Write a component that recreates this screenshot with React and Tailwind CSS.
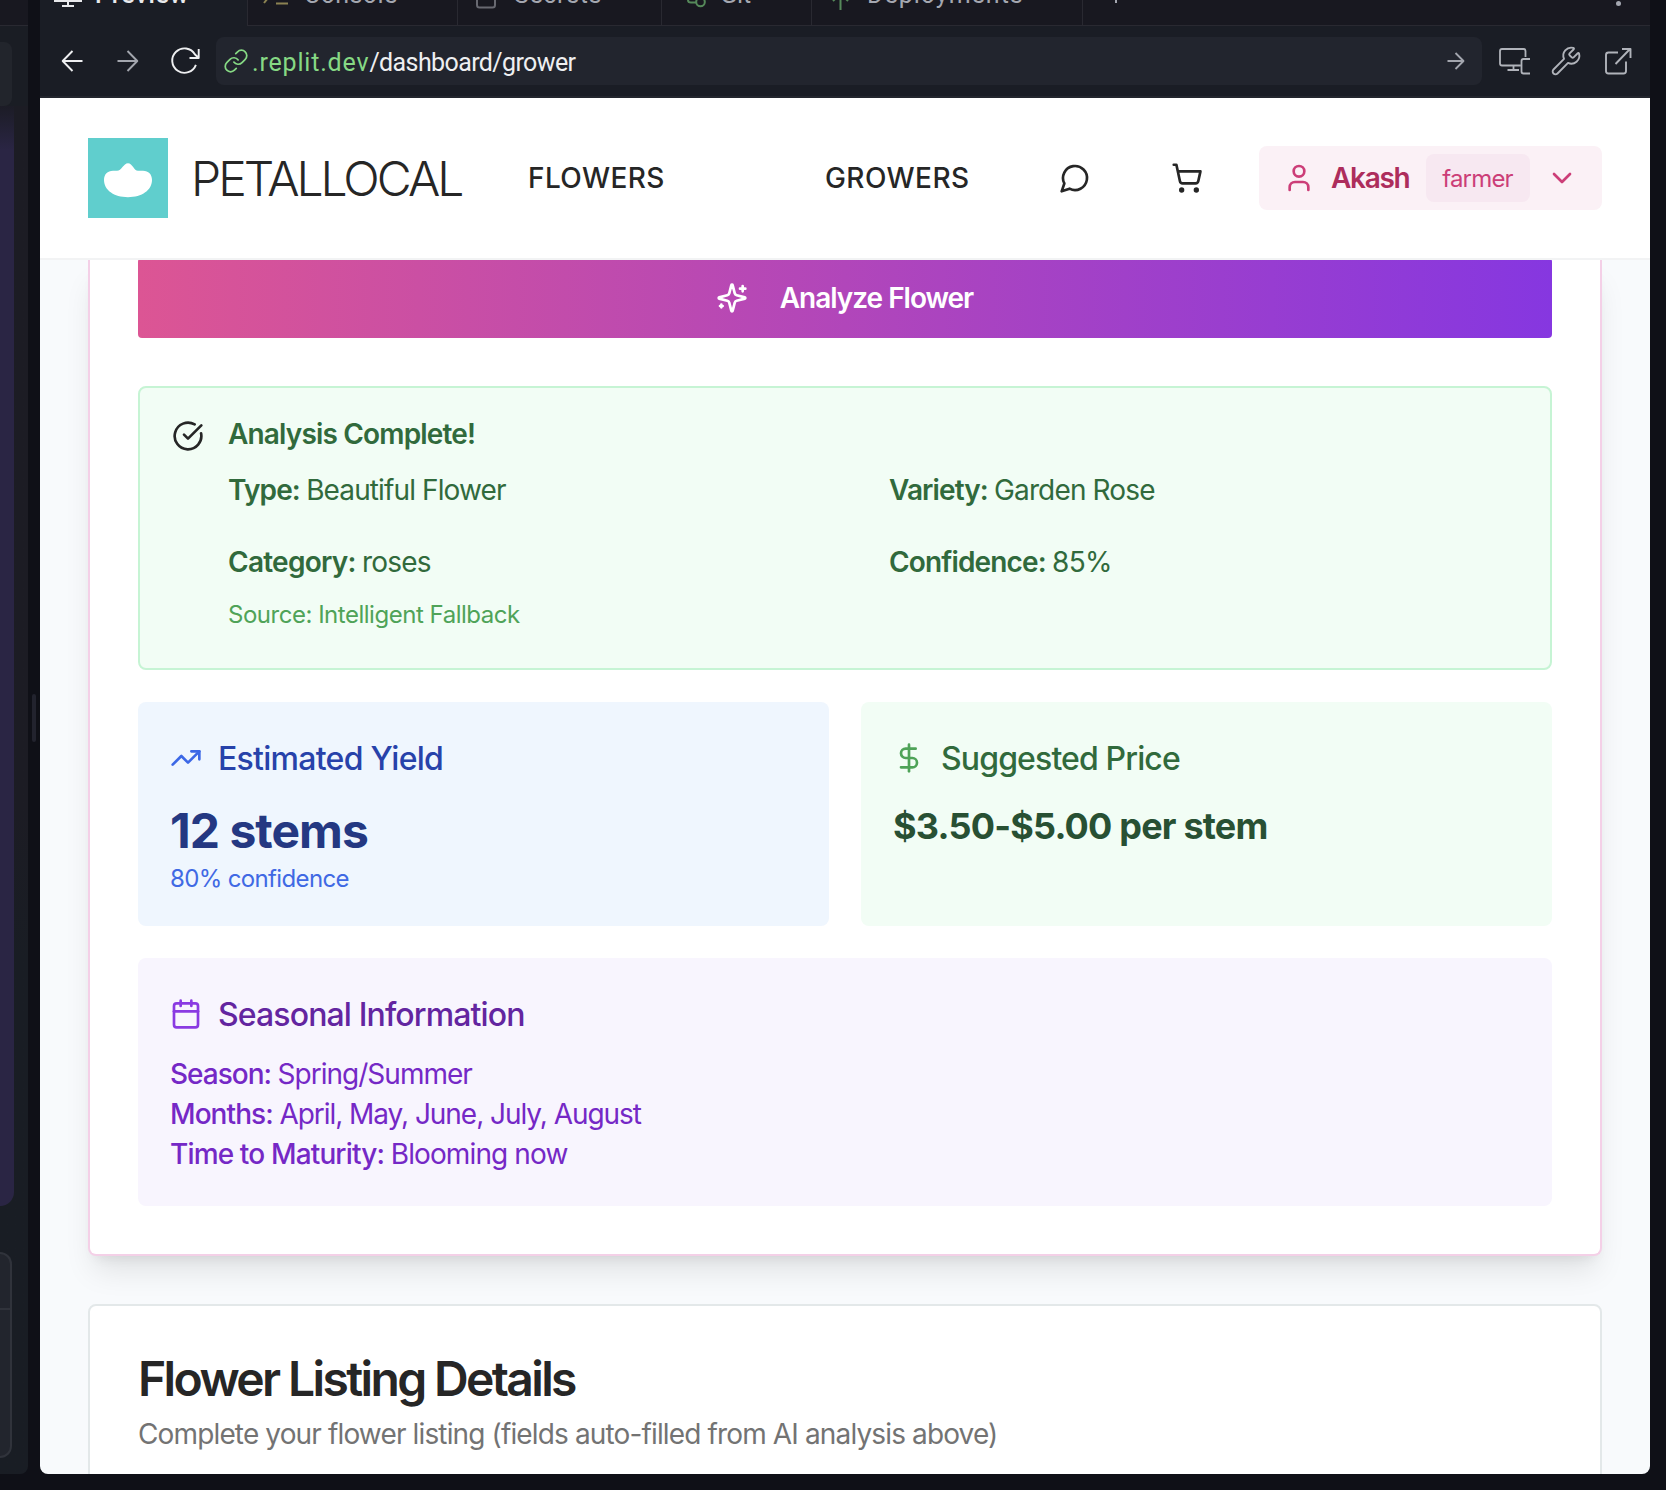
import React from "react";
import { Wrench, Link, User, ChevronDown, TrendingUp, DollarSign, ShoppingCart } from "lucide-react";

function Stroke({ className, w, h, sw = 2, children, cap = "butt" }) {
  return (
    <svg
      className={className}
      width={w}
      height={h}
      viewBox={`0 0 ${w} ${h}`}
      fill="none"
      stroke="currentColor"
      strokeWidth={sw}
      strokeLinecap={cap}
      strokeLinejoin="round"
    >
      {children}
    </svg>
  );
}

function Glyph({ className, children }) {
  return (
    <svg className={className} width="32" height="32" viewBox="0 0 24 24" fill="none" stroke="currentColor" strokeWidth="2" strokeLinecap="round" strokeLinejoin="round">
      {children}
    </svg>
  );
}

function SidePane() {
  return (
    <aside className="flex h-[1474px] w-7 shrink-0 flex-col overflow-hidden rounded-br-lg bg-linear-to-b from-[#1c1c24] from-55% to-[#191d24] to-65%">
      <div className="h-[26px] shrink-0 border-b border-[#292931] bg-[#181820]" />
      <div className="flex h-20 shrink-0 bg-[#1a1d24] pt-4">
        <div className="h-16 w-3 rounded-r-lg bg-[#22252c]" />
      </div>
      <div className="h-[1100px] w-3.5 shrink-0 rounded-br-2xl bg-linear-to-b from-[#1c1c26] to-[#2a2544] to-4%" />
      <div className="mt-[46px] h-[206px] w-3 shrink-0 overflow-hidden rounded-r-2xl border-2 border-l-0 border-[#30333b] bg-[#22252d]">
        <div className="h-[56px] border-b-2 border-[#30333b]" />
      </div>
    </aside>
  );
}

function Tab({ className, icon, children, label }) {
  return (
    <div className={`flex h-[26px] shrink-0 items-start overflow-hidden border-r border-b border-[#292931] bg-[#181820] font-['Roboto',sans-serif] text-[25px] leading-7 text-[#a4a7b0] ${className}`}>
      {icon}
      <span className={`-mt-[19px] whitespace-nowrap ${label}`}>{children}</span>
    </div>
  );
}

function TabBar() {
  return (
    <div className="flex h-[26px] shrink-0 overflow-hidden">
      <div className="flex h-[26px] w-[207px] shrink-0 items-start overflow-hidden bg-[#1a1d25] pl-[14px] font-['Roboto',sans-serif] text-[25px] leading-7 font-medium text-[#e8e9ec]">
        <Stroke w={28} h={8} className="shrink-0">
          <path d="M0 1H28M14 1V6M8 6H20" />
        </Stroke>
        <span className="-mt-[19px] ml-[13px] tracking-[0.8px]">Preview</span>
      </div>
      <Tab
        className="w-[211px] border-l pl-[15px]"
        label="ml-[15px] tracking-[0.4px]"
        icon={
          <Stroke w={26} h={6} className="shrink-0 text-[#8b8252]">
            <path d="M1 3L5 -2M13 3.5H25" />
          </Stroke>
        }
      >
        Console
      </Tab>
      <Tab
        className="w-[204px] pl-[18px]"
        label="ml-[18px] tracking-[0.6px]"
        icon={
          <Stroke w={20} h={9} className="shrink-0 text-[#686971]">
            <path d="M1 0V5Q1 7.5 3.5 7.5H16.500Q19 7.500 19 5V0" />
          </Stroke>
        }
      >
        Secrets
      </Tab>
      <Tab
        className="w-[150px] pl-[25px]"
        label="ml-[14px] tracking-[0px]"
        icon={
          <Stroke w={19} h={8} className="shrink-0 text-[#55895a]">
            <path d="M1 0Q1 2.500 4 2.500H9" />
            <circle cx="13.500" cy="2" r="4.300" />
          </Stroke>
        }
      >
        Git
      </Tab>
      <Tab
        className="w-[271px] pl-[20px]"
        label="ml-[18px] tracking-[1px]"
        icon={
          <Stroke w={17} h={11} className="shrink-0 text-[#55895a]">
            <path d="M8.500 0V10M1 1L3 -1M16 1L14 -1" />
          </Stroke>
        }
      >
        Deployments
      </Tab>
      <div className="flex flex-1 justify-between border-b border-[#292931] bg-[#181820] pr-[29px] pl-8">
        <div className="h-[3px] w-[2px] bg-[#a4a7b0]" />
        <div className="mt-[1px] size-[5px] rounded-full bg-[#a4a7b0]" />
      </div>
    </div>
  );
}

function Toolbar() {
  return (
    <div className="flex h-[72px] shrink-0 items-center border-b-2 border-[#23262e] bg-[#1a1d25] text-[#b0b3ba]">
      <Stroke w={22} h={22} className="ml-[21px] shrink-0 text-[#eeeff1]" sw={1.9}>
        <path d="M21.500 11H2M11.500 1L1.700 11L11.500 21" />
      </Stroke>
      <Stroke w={22} h={22} className="ml-[34px] shrink-0 text-[#a3a6ae]" sw={1.9}>
        <path d="M0.500 11H20M10.500 1L20.300 11L10.500 21" />
      </Stroke>
      <Stroke w={32} h={30} className="ml-[31px] shrink-0 text-[#eeeff1]" sw={1.9}>
        <path d="M25.900 18.800A12.200 12.200 0 1 1 25 8.500L28.500 11.800M28.700 3V12H19.500" />
      </Stroke>
      <div className="ml-[14px] flex h-12 w-[1266px] shrink-0 items-center rounded-lg bg-[#22252e]">
        <Link size={26} strokeWidth={1.6} className="ml-[7px] shrink-0 text-[#86d984]" />
        <div className="mt-[3px] ml-[3px] flex-1 font-['Roboto',sans-serif] text-[25px] leading-8 whitespace-nowrap">
          <span className="tracking-[0.82px] text-[#86d984]">.replit.dev</span>
          <span className="tracking-[-0.6px] text-[#eeeff1]">/dashboard/grower</span>
        </div>
        <Stroke w={18} h={18} className="mr-[17px] shrink-0 text-[#a3a6ae]" sw={1.8}>
          <path d="M0.500 9H16.500M8.500 1L16.500 9L8.500 17" />
        </Stroke>
      </div>
      <Stroke w={32} h={28} className="ml-4 shrink-0" sw={1.8}>
        <path d="M22.500 18.500H4Q2 18.500 2 16.500V4Q2 2 4 2H25.500Q27.500 2 27.500 4V10M15.500 18.500V23M9.500 23H21M32 12H25.500Q23.500 12 23.500 14V24.500Q23.500 26.500 25.500 26.500H32" />
      </Stroke>
      <Wrench size={32} strokeWidth={1.4} className="ml-5 shrink-0" />
      <Stroke w={30} h={30} className="ml-[21px] shrink-0" sw={1.9}>
        <path d="M15 6.500H5.500Q3 6.500 3 9V25Q3 27.500 5.500 27.500H20.500Q23 27.500 23 25V15.500M12.500 18L27 3M19 3H27.500V12" />
      </Stroke>
    </div>
  );
}

function SiteHeader() {
  return (
    <header className="flex h-[162px] shrink-0 items-center border-b-2 border-[#f2f3f4] bg-white pl-12 text-[#262626]">
      <svg width="80" height="80" viewBox="0 0 80 80" className="shrink-0">
        <rect width="80" height="80" fill="#60cecd" />
        <path
          d="M40 25.200C44.500 25.200 46 32.800 50 32.800H55C60.500 32.800 64 36.500 64 42C64 52 54 59.200 40 59.200C26 59.200 16 52 16 42C16 36.500 19.500 32.800 25 32.800H29C33.500 32.800 35.500 25.200 40 25.200Z"
          fill="#fff"
        />
      </svg>
      <div className="mt-0.5 ml-[23px] w-[337px] shrink-0 text-[48px] leading-[56px] font-light tracking-[-3px]">PETALLOCAL</div>
      <div className="w-[297px] shrink-0 text-[28px] leading-10 font-medium tracking-[0.400px]">FLOWERS</div>
      <div className="w-[234px] shrink-0 text-[28px] leading-10 font-medium tracking-[0.430px]">GROWERS</div>
      <Glyph className="mr-20 shrink-0">
        <path d="M7.900 20A9 9 0 1 0 4 16.100L2 22Z" />
      </Glyph>
      <ShoppingCart size={32} className="mr-14 shrink-0" />
      <div className="flex h-16 w-[343px] shrink-0 items-center rounded-lg bg-[#fbf1f6] pl-6 text-[#cc3e78]">
        <User size={32} className="shrink-0" />
        <div className="ml-4 w-[95px] shrink-0 text-[28px] leading-10 font-semibold tracking-[-1.300px] text-[#ad2d5c]">Akash</div>
        <div className="flex h-12 w-[104px] shrink-0 items-center justify-center rounded-lg bg-[#f7e8f1] pt-0.5 pr-px text-2xl tracking-[-0.800px]">farmer</div>
        <ChevronDown size={32} className="ml-4 shrink-0" />
      </div>
    </header>
  );
}

function Field({ label, value, l, v, className = "", weight = "font-semibold" }) {
  return (
    <div className={`flex items-center whitespace-pre text-[28px] ${className}`}>
      <span className={`${weight} ${l}`}>{label}</span>
      <span className={v}>{value}</span>
    </div>
  );
}

function AnalysisCard() {
  return (
    <section className="h-[996px] shrink-0 rounded-b-lg border-2 border-t-0 border-[#f4d0e7] bg-white px-12 shadow-[0_20px_30px_-6px_rgba(0,0,0,0.1),0_8px_12px_-8px_rgba(0,0,0,0.1)]">
      <button className="-mt-[2px] flex h-20 w-full items-center justify-center rounded-[4px] bg-linear-to-r/srgb from-[#dc5594] to-[#8637e0] text-[28px] font-semibold text-white">
        <Glyph className="shrink-0">
          <path d="M9.937 15.500A2 2 0 0 0 8.500 14.063l-6.135-1.582a.5.5 0 0 1 0-.962L8.500 9.936A2 2 0 0 0 9.937 8.500l1.582-6.135a.5.5 0 0 1 .963 0L14.063 8.500A2 2 0 0 0 15.500 9.937l6.135 1.581a.5.5 0 0 1 0 .964L15.500 14.063a2 2 0 0 0-1.437 1.437l-1.582 6.135a.5.5 0 0 1-.963 0z" />
          <path d="M20 3v4M22 5h-4M4 17v2M5 18H3" />
        </Glyph>
        <span className="mr-px ml-8 tracking-[-1.020px]">Analyze Flower</span>
      </button>

      <div className="mt-12 flex h-[284px] rounded-lg border-2 border-[#c6f4d4] bg-[#f2fdf5] pt-8 pr-4 pl-8 text-[#316a3c]">
        <Glyph className="shrink-0 text-[#262626]">
          <path d="M21.801 10A10 10 0 1 1 17 3.335" />
          <path d="m9 11 3 3L22 4" />
        </Glyph>
        <div className="ml-6 flex-1">
          <div className="text-[28px] leading-7 font-semibold tracking-[-0.830px]">Analysis Complete!</div>
          <div className="mt-[14px] grid grid-cols-2 gap-x-4 gap-y-4">
            <Field className="h-14" label="Type: " value="Beautiful Flower" l="tracking-[-0.850px]" v="tracking-[-0.880px]" />
            <Field className="h-14" label="Variety: " value="Garden Rose" l="tracking-[-0.900px]" v="tracking-[-0.850px]" />
            <Field className="h-14" label="Category: " value="roses" l="tracking-[-0.750px]" v="tracking-[-0.800px]" />
            <Field className="h-14" label="Confidence: " value="85%" l="tracking-[-0.850px]" v="tracking-[-0.670px]" />
          </div>
          <div className="mt-[9px] text-2xl leading-8 tracking-[-0.480px] text-[#4fa358]">Source: Intelligent Fallback</div>
        </div>
      </div>

      <div className="mt-8 grid grid-cols-2 gap-8">
        <div className="h-56 rounded-lg bg-[#eff6fe] p-8">
          <div className="flex h-12 items-center">
            <TrendingUp size={32} className="shrink-0 text-[#3c68e6]" />
            <span className="mt-0.5 ml-4 text-[32px] font-medium tracking-[-0.720px] text-[#2742aa]">Estimated Yield</span>
          </div>
          <div className="mt-[17px] text-[48px] leading-16 font-bold tracking-[-0.960px] text-[#243882]">12 stems</div>
          <div className="text-2xl leading-8 tracking-[-0.640px] text-[#4069e4]">80% confidence</div>
        </div>
        <div className="h-56 rounded-lg bg-[#f2fdf5] p-8">
          <div className="flex h-12 items-center">
            <DollarSign size={32} className="shrink-0 text-[#4fa358]" />
            <span className="mt-0.5 ml-4 text-[32px] font-medium tracking-[-0.870px] text-[#316a3c]">Suggested Price</span>
          </div>
          <div className="mt-4 text-4xl leading-14 font-bold tracking-[-0.790px] text-[#285033]">$3.50-$5.00 per stem</div>
        </div>
      </div>

      <div className="mt-8 h-[248px] rounded-lg bg-[#f8f5fe] p-8 text-[#7528c6]">
        <div className="flex h-12 items-center">
          <Glyph className="shrink-0 text-[#8a3ae2]">
            <path d="M8 2v4M16 2v4" />
            <rect width="18" height="18" x="3" y="4" rx="2" />
            <path d="M3 10h18" />
          </Glyph>
          <span className="mt-0.5 ml-4 text-[32px] font-medium tracking-[-0.870px] text-[#6325a0]">Seasonal Information</span>
        </div>
        <div className="mt-4">
          <Field className="h-10" weight="font-medium" label="Season: " value="Spring/Summer" l="tracking-[-1.000px]" v="tracking-[-0.980px]" />
          <Field className="h-10" weight="font-medium" label="Months: " value="April, May, June, July, August" l="tracking-[-0.920px]" v="tracking-[-1.040px]" />
          <Field className="h-10" weight="font-medium" label="Time to Maturity: " value="Blooming now" l="tracking-[-0.850px]" v="tracking-[-0.880px]" />
        </div>
      </div>
    </section>
  );
}

function ListingCard() {
  return (
    <section className="mt-12 h-[200px] shrink-0 rounded-t-lg border-2 border-[#e3e8e9] bg-white px-12 pt-[49px]">
      <h2 className="text-[48px] leading-[48px] font-semibold tracking-[-2.630px] text-[#262626]">Flower Listing Details</h2>
      <p className="mt-[11px] text-[28px] leading-10 tracking-[-0.860px] text-[#737373]">
        Complete your flower listing (fields auto-filled from AI analysis above)
      </p>
    </section>
  );
}

export default function App() {
  return (
    <div className="flex h-[1490px] w-[1666px] overflow-hidden bg-[#0f1017] font-['Inter',sans-serif]">
      <SidePane />
      <div className="flex w-3 shrink-0 justify-center pt-[694px]">
        <div className="h-12 w-1 rounded-full bg-[#22232e]" />
      </div>
      <div className="flex h-[1474px] w-[1610px] shrink-0 flex-col overflow-hidden rounded-b-lg bg-[#1a1d25]">
        <TabBar />
        <Toolbar />
        <SiteHeader />
        <main className="flex flex-1 flex-col overflow-hidden bg-[#f8fafc] px-12">
          <AnalysisCard />
          <ListingCard />
        </main>
      </div>
    </div>
  );
}
